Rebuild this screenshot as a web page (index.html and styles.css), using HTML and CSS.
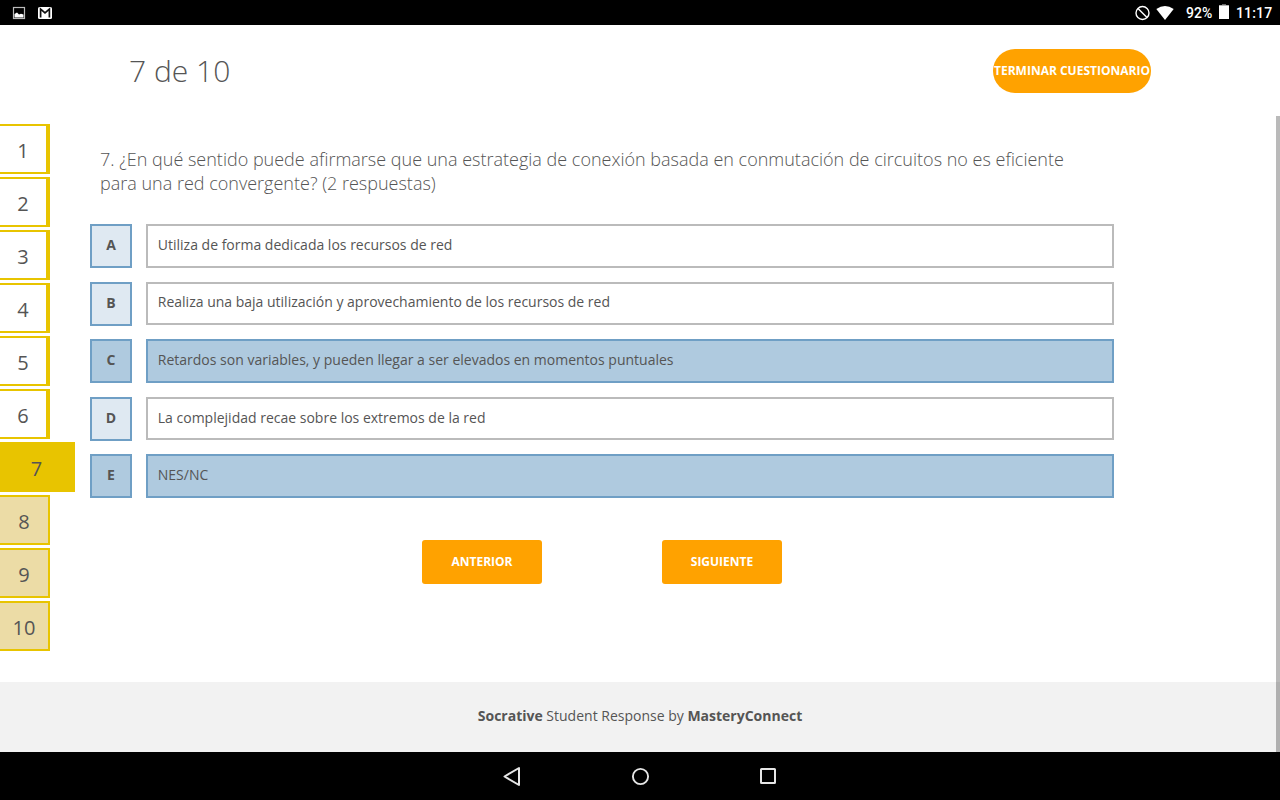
FILE: index.html
```html
<!DOCTYPE html>
<html lang="es">
<head>
<meta charset="utf-8">
<title>Cuestionario</title>
<link rel="stylesheet" href="styles.css">
</head>
<body>
<div class="status">
  <div class="status-left">
    <svg width="14" height="14" viewBox="0 0 14 14"><rect x="1.500" y="1.500" width="11" height="11" fill="none" stroke="#bbb" stroke-width="1.200"/><path d="M2.500 11.500V8L5 6.500L7 8.500L9 7.800L11.500 8.500V11.500Z" fill="#fff"/></svg>
    <svg width="14" height="12" viewBox="0 0 14 12"><rect width="14" height="12" rx="1.500" fill="#fff"/><path d="M2.600 10.500V2.200L7 6L11.400 2.200V10.500" fill="none" stroke="#111" stroke-width="1.700"/></svg>
  </div>
  <div class="status-right">
    <svg class="dnd" width="16" height="16" viewBox="0 0 16 16"><circle cx="8.500" cy="8" r="6.500" fill="none" stroke="#fff" stroke-width="1.400"/><path d="M4 3.500L13 12.500" stroke="#fff" stroke-width="1.400"/></svg>
    <svg class="wifi" width="18" height="14" viewBox="0 0 18 14"><path d="M0.300 3Q9-3 17.700 3L9 14Z" fill="#fff"/></svg>
    <span class="percent">92%</span>
    <svg class="battery" width="10" height="15" viewBox="0 0 10 15"><path d="M3 0H7V1H10V2H0V1H3Z" fill="#666"/><rect y="1.500" width="10" height="13.500" fill="#fff"/></svg>
    <span class="clock">11:17</span>
  </div>
</div>
<header class="header">
  <h1 class="progress">7 de 10</h1>
  <button class="finish">TERMINAR CUESTIONARIO</button>
</header>
<div class="content">
  <nav class="pager">
    <a class="page done">1</a>
    <a class="page done">2</a>
    <a class="page done">3</a>
    <a class="page done">4</a>
    <a class="page done">5</a>
    <a class="page done">6</a>
    <a class="page current">7</a>
    <a class="page">8</a>
    <a class="page">9</a>
    <a class="page">10</a>
  </nav>
  <main class="quiz">
    <p class="question">7. ¿En qué sentido puede afirmarse que una estrategia de conexión basada en conmutación de circuitos no es eficiente<br>para una red convergente? (2 respuestas)</p>
    <div class="answers">
      <div class="answer"><span class="letter">A</span><span class="text">Utiliza de forma dedicada los recursos de red</span></div>
      <div class="answer"><span class="letter">B</span><span class="text">Realiza una baja utilización y aprovechamiento de los recursos de red</span></div>
      <div class="answer selected"><span class="letter">C</span><span class="text">Retardos son variables, y pueden llegar a ser elevados en momentos puntuales</span></div>
      <div class="answer"><span class="letter">D</span><span class="text">La complejidad recae sobre los extremos de la red</span></div>
      <div class="answer selected"><span class="letter">E</span><span class="text">NES/NC</span></div>
    </div>
    <div class="actions">
      <button class="step">ANTERIOR</button>
      <button class="step">SIGUIENTE</button>
    </div>
  </main>
</div>
<footer class="footer"><p><b>Socrative</b> Student Response by <b>MasteryConnect</b></p></footer>
<div class="scrollbar"></div>
<div class="navbar">
  <svg width="20" height="22" viewBox="0 0 20 22"><path d="M2.500 11.500L17 3V20Z" fill="none" stroke="#e6e6e6" stroke-width="2" stroke-linejoin="round"/></svg>
  <svg width="20" height="20" viewBox="0 0 20 20"><circle cx="10.500" cy="10.500" r="7.600" fill="none" stroke="#e6e6e6" stroke-width="1.900"/></svg>
  <svg width="20" height="20" viewBox="0 0 20 20"><rect x="3" y="3" width="14" height="14" rx="0.500" fill="none" stroke="#e6e6e6" stroke-width="2"/></svg>
</div>
</body>
</html>
```

FILE: styles.css
```css
* { box-sizing: border-box; }
body {
  margin: 0;
  width: 1280px;
  height: 800px;
  overflow: hidden;
  display: flex;
  flex-direction: column;
  background: #fff;
  color: #555;
  font-family: "Open Sans", sans-serif;
  font-size: 14px;
}
svg { display: block; flex: none; }
button {
  border: 0;
  padding: 0;
  background: #ffa200;
  color: #fff;
  font: bold 12px/44px "Open Sans", sans-serif;
  height: 44px;
  white-space: nowrap;
}
.status {
  height: 25px;
  flex: none;
  background: #000;
  color: #fff;
  display: flex;
  justify-content: space-between;
  align-items: center;
  padding: 0 8px 0 12px;
  font: 500 14px/25px Roboto, sans-serif;
}
.status-left { display: flex; align-items: center; gap: 12px; }
.status-right { display: flex; align-items: center; }
.wifi { margin: 0 12px 0 6px; }
.percent { width: 27px; padding-top: 1px; }
.battery { margin: 0 7px 2px 6px; }
.clock { width: 36px; padding-top: 1px; letter-spacing: 0.15px; }
.header {
  height: 91px;
  flex: none;
  display: flex;
  align-items: center;
  justify-content: space-between;
  padding: 0 129px 0 129px;
}
.progress { margin: 0; font-size: 30px; font-weight: 300; line-height: 40px; }
.finish { width: 158px; border-radius: 22px; }
.content { height: 566px; flex: none; display: flex; padding-top: 8px; }
.pager { width: 90px; display: flex; flex-direction: column; gap: 3px; }
.page {
  width: 50px;
  height: 50px;
  border: 2px solid #e8c400;
  border-left: 0;
  background: #ecdca6;
  font-size: 20px;
  line-height: 50px;
  text-align: center;
}
.page.done { background: #fff; border-right-width: 4px; }
.page.current { width: 75px; background: #e8c400; }
.quiz { width: 1024px; padding-top: 23px; }
.question {
  margin: 0 0 29px;
  padding-left: 10px;
  font-size: 18px;
  font-weight: 300;
  line-height: 24px;
  white-space: nowrap;
}
.answers { display: flex; flex-direction: column; gap: 14px; }
.answer { display: flex; gap: 14px; height: 43.6px; line-height: 38px; }
.letter {
  width: 42px;
  height: 44px;
  border: 2px solid #6f9fc5;
  background: #dfe9f2;
  text-align: center;
  font-weight: bold;
}
.text { flex: 1; border: 2px solid #bbb; padding: 0.8px 0 0 9.8px; line-height: 36px; }
.selected .letter, .selected .text { background: #afcadf; border-color: #6f9fc5; }
.actions { display: flex; justify-content: center; gap: 120px; margin: 42px 0 0; }
.step { width: 120px; border-radius: 3px; }
.footer { height: 70px; flex: none; background: #f2f2f2; text-align: center; }
.footer p { margin: 0; line-height: 68px; }
.scrollbar {
  position: absolute;
  left: 1276px;
  top: 116px;
  width: 4px;
  height: 636px;
  background: rgba(0, 0, 0, 0.27);
}
.navbar {
  flex: 1;
  background: #000;
  display: flex;
  justify-content: center;
  align-items: center;
  gap: 108px;
}
```
